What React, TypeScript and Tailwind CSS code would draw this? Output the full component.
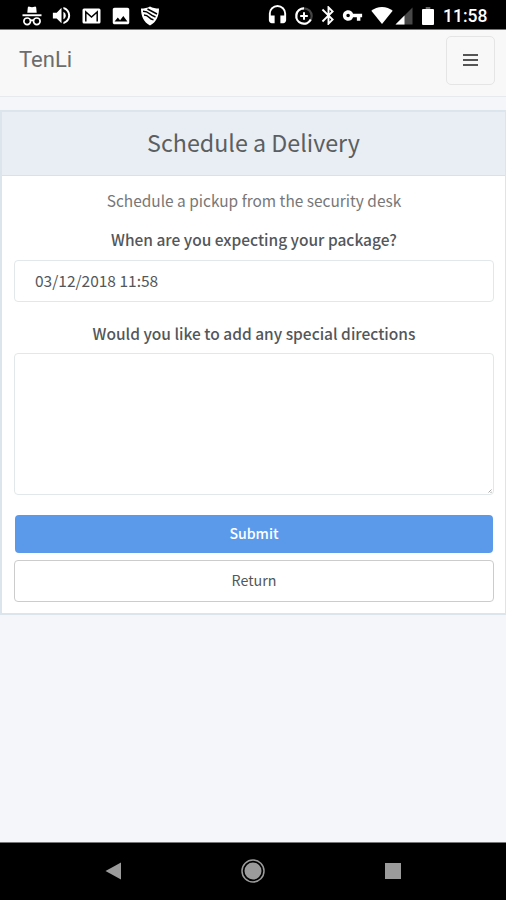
import React from 'react';
import { MdBluetooth, MdHeadset, MdImage, MdVolumeUp, MdVpnKey } from 'react-icons/md';

const IncognitoIcon = () => (
  <svg viewBox="0 0 20 20" className="w-5 h-5" fill="currentColor">
    <path d="M5.3 6.8 5.8 1.6Q6.2.3 7.5.7L10 1.3 12.5.7q1.3-.4 1.700.9l.5 5.2z" />
    <path d="M.5 8.300h19v1.900H.5z" />
    <g fill="none" stroke="currentColor" strokeWidth="1.7">
      <circle cx="5.2" cy="15.3" r="3.3" />
      <circle cx="14.8" cy="15.3" r="3.3" />
      <path d="M8.3 14.7q1.7-1.2 3.4 0" />
    </g>
  </svg>
);

const MailIcon = () => (
  <svg viewBox="0 0 19 16" className="w-[19px] h-4" fill="none">
    <rect x=".5" y=".5" width="18" height="15" rx="1.5" fill="#fff" />
    <path d="M3.8 13.5V4l5.7 5 5.7-5v9.5" stroke="#000" strokeWidth="1.5" />
  </svg>
);

const ShieldIcon = () => (
  <svg viewBox="0 0 20 20" className="w-5 h-5">
    <path d="M10 .5c2.6 1.6 5.6 2 9 2C19 10 16.5 16 10 19.5 3.5 16 1 10 1 2.5c3.4 0 6.4-.4 9-2z" fill="#fff" />
    <path d="M7.5 3 17 8M3 5.3q4 .2 6.3 2.2T15.5 11M4 9q3 0 5 2.3t4.500 2.500" fill="none" stroke="#000" strokeWidth="1.5" />
  </svg>
);

const DataSaverIcon = () => (
  <svg viewBox="0 0 20 20" className="w-5 h-5" fill="none" strokeWidth="2.2">
    <circle cx="10" cy="10" r="7.7" stroke="#444" />
    <path d="M10 2.3A7.7 7.7 0 1 0 16.8 13.6" stroke="#fff" />
    <path d="M10 6.2v7.600M6.200 10h7.600" stroke="#fff" strokeWidth="2" />
  </svg>
);

const WifiIcon = () => (
  <svg viewBox="0 0 22 17" className="w-[22px] h-[17px]" fill="currentColor">
    <path d="M11 17 .3 3.7C3.2 1.4 6.9 0 11 0s7.8 1.4 10.7 3.7z" />
  </svg>
);

const SignalIcon = () => (
  <svg viewBox="0 0 18 18" className="w-[18px] h-[18px]">
    <path d="M.5 17.5h17V.5z" fill="#484848" />
    <path d="M.5 17.5h9v-9z" fill="#fff" />
  </svg>
);

const BatteryIcon = () => (
  <svg viewBox="0 0 12 18" className="w-3 h-[18px]">
    <path d="M3.7 0h4.600v2H3.700z" fill="#666" />
    <rect y="2" width="12" height="16" rx="1" fill="#fff" />
  </svg>
);

const StatusBar = () => (
  <header className="h-[30px] shrink-0 bg-black border-b border-[#777] text-white flex items-center justify-between pt-0.5 pl-[17.5px] pr-[18px]">
    <div className="flex">
      <span className="w-[29.5px] flex items-center justify-center"><IncognitoIcon /></span>
      <span className="w-[29.5px] flex items-center justify-center"><MdVolumeUp size={23} /></span>
      <span className="w-[29.5px] flex items-center justify-center"><MailIcon /></span>
      <span className="w-[29.5px] flex items-center justify-center"><MdImage size={22} /></span>
      <span className="w-[29.5px] flex items-center justify-center"><ShieldIcon /></span>
    </div>
    <div className="flex items-center">
      <MdHeadset size={23} className="mr-[5px]" />
      <DataSaverIcon />
      <MdBluetooth size={23} className="ml-[3px] mr-0.5" />
      <MdVpnKey size={21} className="mr-2" />
      <WifiIcon />
      <span className="ml-0.5 mr-[9px]"><SignalIcon /></span>
      <BatteryIcon />
      <span className="ml-[9px] w-[45px] font-['Roboto',sans-serif] font-medium text-[17.5px] leading-5 whitespace-nowrap">11:58</span>
    </div>
  </header>
);

const NavBar = () => (
  <nav className="h-[67px] shrink-0 bg-[#f8f8f8] border-b border-[#e7eaed] flex items-center justify-between pl-[19px] pr-[11px] pb-[5px]">
    <span className="pb-0.5 font-['Roboto',sans-serif] text-[22px] text-[#6c6c6c]">TenLi</span>
    <button className="w-[49px] h-[49px] pb-0.5 rounded-[5px] border-[1.5px] border-[#e5e5e5] flex flex-col items-center justify-center gap-[3px]" aria-label="Toggle navigation">
      <span className="w-[15px] h-0.5 bg-[#555]" />
      <span className="w-[15px] h-0.5 bg-[#555]" />
      <span className="w-[15px] h-0.5 bg-[#555]" />
    </button>
  </nav>
);

const DeliveryForm = () => (
  <section className="mt-[13px] h-[505px] shrink-0 bg-white border-2 border-r border-[#dce5ec] text-center text-[#53575a]">
    <h1 className="h-[64px] bg-[#e8eef4] border-b border-[#d9e2e8] text-[23.25px] leading-[60px] text-[#5b5f62]">Schedule a Delivery</h1>
    <form className="pl-3 pr-[11px] flex flex-col" onSubmit={(e) => e.preventDefault()}>
      <p className="mt-[13px] h-6 leading-[22px] text-[15.45px] text-[#777]">Schedule a pickup from the security desk</p>
      <label htmlFor="date" className="mt-[15px] h-6 leading-[22px] text-[15.5px] font-medium">When are you expecting your package?</label>
      <input
        id="date"
        defaultValue="03/12/2018 11:58"
        className="mt-2 h-[42px] px-5 pb-0.5 rounded border-[1.5px] border-[#e2e8ea] text-[15.5px] outline-none"
      />
      <label htmlFor="directions" className="mt-5 h-6 leading-[22px] text-[15.5px] font-medium">Would you like to add any special directions</label>
      <div className="relative mt-[7px] h-[142px]">
        <textarea id="directions" className="block w-full h-full rounded border-[1.5px] border-[#e2e8ea] outline-none resize-none" />
        <svg viewBox="0 0 4 4" className="absolute right-0.5 bottom-0.5 w-1 h-1"><path d="M.5 3.500l3-3M2.500 4 4 2.500" stroke="#aaa" /></svg>
      </div>
      <button type="submit" className="mt-5 mx-px h-[38px] pb-px rounded-sm bg-[#5b9aeb] text-white text-[14.1px] font-medium">Submit</button>
      <button type="button" className="mt-[7px] h-[42px] pb-0.5 rounded border-[1.5px] border-[#ccc] text-[14.25px]">Return</button>
    </form>
  </section>
);

const SystemNav = () => (
  <footer className="mt-auto h-[58px] shrink-0 bg-black border-t border-[#777] flex items-center justify-between pl-[105px] pr-[105px] pb-0.5">
    <svg viewBox="0 0 17 18" className="w-[17px] h-[18px]" fill="#9b9b9b"><path d="M.5 9 16 .5v17z" /></svg>
    <svg viewBox="0 0 24 24" className="w-6 h-6 mr-px">
      <circle cx="12" cy="12" r="11" fill="none" stroke="#9b9b9b" strokeWidth="1.5" />
      <circle cx="12" cy="12" r="8.5" fill="#9b9b9b" />
    </svg>
    <span className="w-4 h-4 bg-[#9b9b9b]" />
  </footer>
);

export default function App() {
  return (
    <div className="w-full h-screen bg-[#f4f6fa] flex flex-col overflow-hidden font-['Noto_Sans_CJK_SC',sans-serif]">
      <StatusBar />
      <NavBar />
      <DeliveryForm />
      <SystemNav />
    </div>
  );
}
